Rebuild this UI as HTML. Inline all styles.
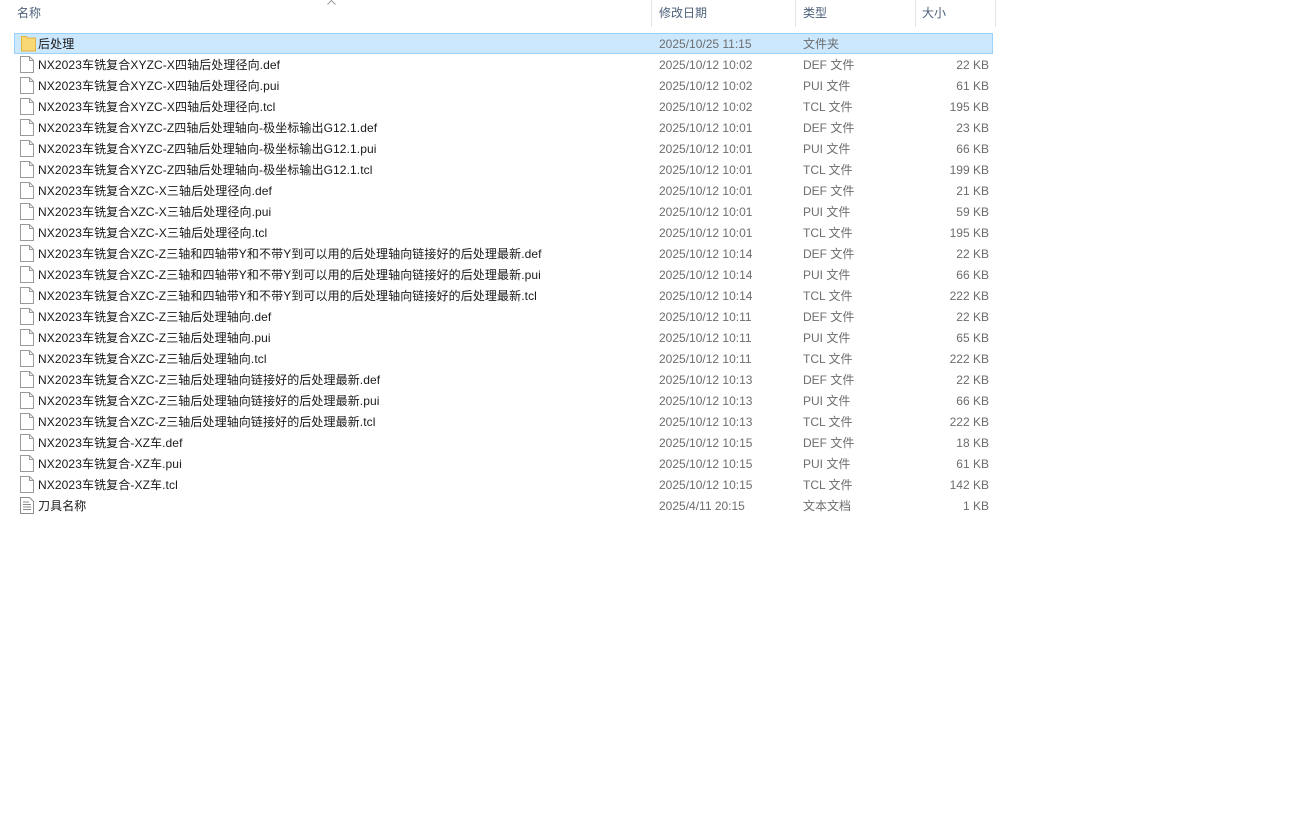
<!DOCTYPE html>
<html><head><meta charset="utf-8"><style>
*{margin:0;padding:0;box-sizing:border-box}
body{width:1310px;height:824px;background:#fff;font-family:"Liberation Sans","Noto Sans CJK SC",sans-serif;font-size:12px;color:#1a1a1a;position:relative;overflow:hidden}
.h{position:absolute;top:0;height:27px;line-height:27px;color:#4c607a;border-right:1px solid #e5e5e5}
.row{position:absolute;left:14px;width:979px;height:21px;line-height:22px}
.row.sel{background:#cce8ff;border:1px solid #99d1ff;line-height:20px}
.n{position:absolute;left:24px;white-space:nowrap;letter-spacing:0.1px}
.d{position:absolute;left:645px;color:#6d6d6d}
.t{position:absolute;left:789px;color:#6d6d6d}
.s{position:absolute;right:4px;color:#6d6d6d}
.ic{position:absolute;left:6px;top:2px}
</style></head><body>
<div class="h" style="left:0;width:652px;padding-left:17px">名称</div>
<svg style="position:absolute;left:327px;top:0" width="9" height="5" viewBox="0 0 9 5"><path d="M0.5 4.5l4-4 4 4" fill="none" stroke="#999"/></svg>
<div class="h" style="left:652px;width:144px;padding-left:7px">修改日期</div>
<div class="h" style="left:796px;width:120px;padding-left:7px">类型</div>
<div class="h" style="left:916px;width:80px;padding-left:6px">大小</div>
<div id="rows"></div>
<script>
var F='<svg class="ic" width="14" height="17" viewBox="0 0 14 17"><path d="M0.5 0.5h9l4 4v12h-13z" fill="#fff" stroke="#9a9a9a"/><path d="M9.5 0.5v4h4" fill="none" stroke="#9a9a9a"/></svg>';
var D='<svg class="ic" width="14" height="17" viewBox="0 0 14 17"><path d="M0.5 0.5h9l4 4v12h-13z" fill="#fff" stroke="#8a8a8a"/><path d="M3 5h6M3 7.5h8M3 10h8M3 12.5h8" stroke="#8a8a8a"/></svg>';
var FO='<svg class="ic" style="top:1px" width="15" height="17" viewBox="0 0 15 17"><path d="M0.5 1.5h5l1 1.5h8v13h-14z" fill="#f8d775" stroke="#e0b540"/></svg>';
var r=[["后处理","2025/10/25 11:15","文件夹","",FO],
["NX2023车铣复合XYZC-X四轴后处理径向.def","2025/10/12 10:02","DEF 文件","22 KB"],
["NX2023车铣复合XYZC-X四轴后处理径向.pui","2025/10/12 10:02","PUI 文件","61 KB"],
["NX2023车铣复合XYZC-X四轴后处理径向.tcl","2025/10/12 10:02","TCL 文件","195 KB"],
["NX2023车铣复合XYZC-Z四轴后处理轴向-极坐标输出G12.1.def","2025/10/12 10:01","DEF 文件","23 KB"],
["NX2023车铣复合XYZC-Z四轴后处理轴向-极坐标输出G12.1.pui","2025/10/12 10:01","PUI 文件","66 KB"],
["NX2023车铣复合XYZC-Z四轴后处理轴向-极坐标输出G12.1.tcl","2025/10/12 10:01","TCL 文件","199 KB"],
["NX2023车铣复合XZC-X三轴后处理径向.def","2025/10/12 10:01","DEF 文件","21 KB"],
["NX2023车铣复合XZC-X三轴后处理径向.pui","2025/10/12 10:01","PUI 文件","59 KB"],
["NX2023车铣复合XZC-X三轴后处理径向.tcl","2025/10/12 10:01","TCL 文件","195 KB"],
["NX2023车铣复合XZC-Z三轴和四轴带Y和不带Y到可以用的后处理轴向链接好的后处理最新.def","2025/10/12 10:14","DEF 文件","22 KB"],
["NX2023车铣复合XZC-Z三轴和四轴带Y和不带Y到可以用的后处理轴向链接好的后处理最新.pui","2025/10/12 10:14","PUI 文件","66 KB"],
["NX2023车铣复合XZC-Z三轴和四轴带Y和不带Y到可以用的后处理轴向链接好的后处理最新.tcl","2025/10/12 10:14","TCL 文件","222 KB"],
["NX2023车铣复合XZC-Z三轴后处理轴向.def","2025/10/12 10:11","DEF 文件","22 KB"],
["NX2023车铣复合XZC-Z三轴后处理轴向.pui","2025/10/12 10:11","PUI 文件","65 KB"],
["NX2023车铣复合XZC-Z三轴后处理轴向.tcl","2025/10/12 10:11","TCL 文件","222 KB"],
["NX2023车铣复合XZC-Z三轴后处理轴向链接好的后处理最新.def","2025/10/12 10:13","DEF 文件","22 KB"],
["NX2023车铣复合XZC-Z三轴后处理轴向链接好的后处理最新.pui","2025/10/12 10:13","PUI 文件","66 KB"],
["NX2023车铣复合XZC-Z三轴后处理轴向链接好的后处理最新.tcl","2025/10/12 10:13","TCL 文件","222 KB"],
["NX2023车铣复合-XZ车.def","2025/10/12 10:15","DEF 文件","18 KB"],
["NX2023车铣复合-XZ车.pui","2025/10/12 10:15","PUI 文件","61 KB"],
["NX2023车铣复合-XZ车.tcl","2025/10/12 10:15","TCL 文件","142 KB"],
["刀具名称","2025/4/11 20:15","文本文档","1 KB",D]];
var h='';
r.forEach(function(x,i){var sel=i==0;h+='<div class="row'+(sel?' sel':'')+'" style="top:'+(33+i*21)+'px">'+(x[4]||F)+'<span class="n"'+(sel?' style="left:23px"':'')+'>'+x[0]+'</span><span class="d"'+(sel?' style="left:644px"':'')+'>'+x[1]+'</span><span class="t"'+(sel?' style="left:788px"':'')+'>'+x[2]+'</span><span class="s">'+x[3]+'</span></div>';});
document.getElementById('rows').innerHTML=h;
</script>
</body></html>
